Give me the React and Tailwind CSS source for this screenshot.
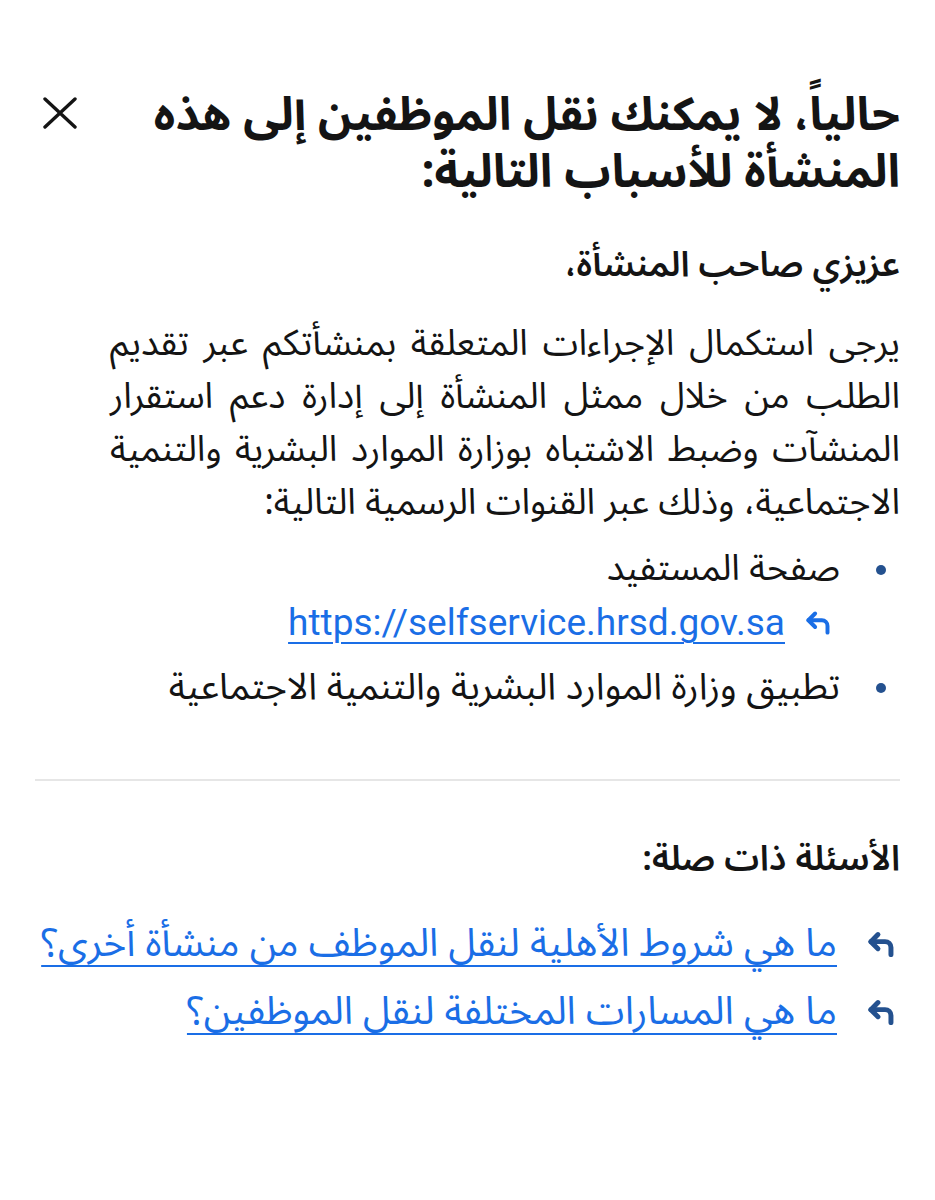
import React from 'react'

const ar = "font-['Noto_Sans_Arabic','DejaVu_Sans',sans-serif]"

const HookArrow = ({ className = '', sw = 3.5 }) => (
  <svg viewBox="0 0 24 22" fill="none" stroke="currentColor" strokeWidth={sw} strokeLinecap="round" strokeLinejoin="round" className={className}>
    <path d="M9 3 3 9l6 6" />
    <path d="M3 9h12a5 5 0 0 1 5 5v6" />
  </svg>
)

const CloseIcon = () => (
  <svg viewBox="0 0 34 32" fill="none" stroke="currentColor" strokeWidth="3.4" strokeLinecap="round" className="w-[34px] h-[32px]">
    <path d="M2 2l30 28M32 2 2 30" />
  </svg>
)

const Dot = () => <span className="mt-[22px] w-[10px] h-[10px] rounded-full bg-[#24518f] shrink-0" />

const bodyLines = [
  'يرجى استكمال الإجراءات المتعلقة بمنشأتكم عبر تقديم',
  'الطلب من خلال ممثل المنشأة إلى إدارة دعم استقرار',
  'المنشآت وضبط الاشتباه بوزارة الموارد البشرية والتنمية',
]

const faqs = [
  'ما هي شروط الأهلية لنقل الموظف من منشأة أخرى؟',
  'ما هي المسارات المختلفة لنقل الموظفين؟',
]

export default function App() {
  return (
    <div dir="rtl" className={`${ar} bg-white text-[#141414] w-[935px] min-h-[1200px] px-[35px] pt-[87px]`}>
      <div className="flex items-start justify-between">
        <h1 className="font-bold text-[46px] leading-[57px] whitespace-nowrap">
          حالياً، لا يمكنك نقل الموظفين إلى هذه
          <br />
          المنشأة للأسباب التالية:
        </h1>
        <button className="mt-[10px] ml-[8px] text-[#141414]">
          <CloseIcon />
        </button>
      </div>

      <p className="mt-[42px] font-semibold text-[35px] leading-[44px]">عزيزي صاحب المنشأة،</p>

      <div className="mt-[31px] text-[36px] leading-[53px] pl-[75px]">
        {bodyLines.map((l) => (
          <div key={l} className="text-justify [text-align-last:justify] whitespace-nowrap">{l}</div>
        ))}
        <div>الاجتماعية، وذلك عبر القنوات الرسمية التالية:</div>
      </div>

      <ul className="mt-[13px] text-[36px] leading-[53px]">
        <li className="flex gap-[36px] pr-[14px]">
          <Dot />
          <div>
            <div>صفحة المستفيد</div>
            <div className="flex items-center gap-[20px] mr-[8px]">
              <HookArrow className="w-[27px] h-[25px] text-[#1a6ee6] shrink-0" />
              <a href="#" dir="ltr" className="font-['Roboto',sans-serif] text-[37px] text-[#1a6ee6] underline underline-offset-[7px] decoration-[2px]">
                https://selfservice.hrsd.gov.sa
              </a>
            </div>
          </div>
        </li>
        <li className="flex gap-[36px] pr-[14px] mt-[12px]">
          <Dot />
          <div className="whitespace-nowrap text-[37px]">تطبيق وزارة الموارد البشرية والتنمية الاجتماعية</div>
        </li>
      </ul>

      <div className="mt-[65px] h-[2px] bg-[#e6e6e6]" />

      <p className="mt-[56px] font-semibold text-[35px] leading-[44px]">الأسئلة ذات صلة:</p>

      <div className="mt-[37px] flex flex-col gap-[16px]">
        {faqs.map((q) => (
          <div key={q} className="flex items-center gap-[30px] pr-[4px]">
            <HookArrow className="w-[29px] h-[26px] text-[#24518f] shrink-0" sw={4.2} />
            <a href="#" className="text-[39px] leading-[52px] text-[#1a6ee6] underline underline-offset-[9px] decoration-[2px] whitespace-nowrap">
              {q}
            </a>
          </div>
        ))}
      </div>
    </div>
  )
}
